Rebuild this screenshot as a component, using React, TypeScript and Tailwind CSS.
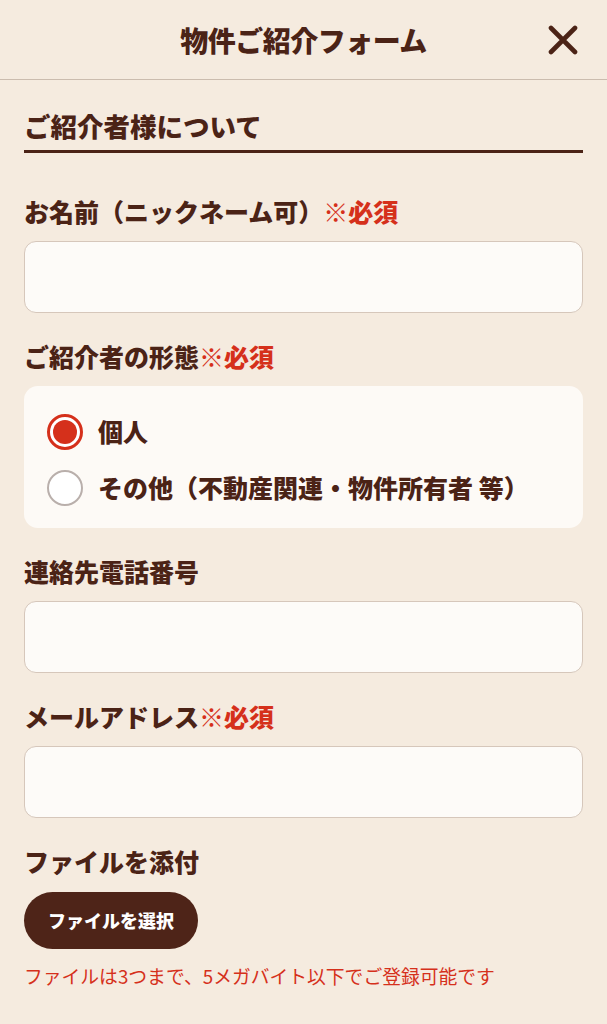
import { useState } from 'react'

const FONT = '"Noto Sans CJK JP", "Noto Sans", sans-serif'

function Required() {
  return <span className="text-[#d5301b]">※必須</span>
}

function FieldLabel({ children, required, first }: { children: React.ReactNode; required?: boolean; first?: boolean }) {
  return (
    <div
      className={
        (first ? 'mt-[43px] ' : 'mt-[28px] ') +
        'h-[30px] flex items-center text-[25px] leading-[30px] font-black text-[#4b2316]'
      }
    >
      <span>{children}</span>
      {required && <Required />}
    </div>
  )
}

function TextInput({ type = 'text' }: { type?: string }) {
  return (
    <input
      type={type}
      className="mt-[15px] block w-full h-[72px] rounded-[12px] border-[1.5px] border-[#d6c7bb] bg-[#fdfbf8] px-4 text-[20px] text-[#4b2316] outline-none"
    />
  )
}

function Radio({ checked, label, onClick }: { checked: boolean; label: string; onClick: () => void }) {
  return (
    <button type="button" onClick={onClick} className="flex items-center gap-[15px] h-[40px] text-left">
      {checked ? (
        <span className="w-[36px] h-[36px] rounded-full border-[3px] border-[#d5301b] bg-white flex items-center justify-center shrink-0">
          <span className="w-[24px] h-[24px] rounded-full bg-[#d5301b]" />
        </span>
      ) : (
        <span className="w-[36px] h-[36px] rounded-full border-[2.5px] border-[#b9afab] bg-white shrink-0" />
      )}
      <span className="text-[25px] font-black text-[#4b2316]">{label}</span>
    </button>
  )
}

export default function App() {
  const [kind, setKind] = useState<'personal' | 'other'>('personal')

  return (
    <div className="min-h-[1024px] w-full bg-[#f5ebdf]" style={{ fontFamily: FONT }}>
      {/* Header */}
      <header className="h-[80px] grid grid-cols-[1fr_auto_1fr] items-center border-b-[1.5px] border-[#cbbcae]">
        <div />
        <h1 className="text-[28px] font-black text-[#4b2316] tracking-[-0.5px]">物件ご紹介フォーム</h1>
        <div className="flex justify-end pr-[29px]">
          <button type="button" aria-label="閉じる" className="text-[#4b2316]">
            <svg viewBox="0 0 30 30" className="w-[30px] h-[30px]" fill="none" stroke="currentColor" strokeWidth={4.6} strokeLinecap="round">
              <path d="M3 3L27 27M27 3L3 27" />
            </svg>
          </button>
        </div>
      </header>

      <main className="px-[24px]">
        <h2 className="mt-[29px] pb-[7px] border-b-[3px] border-[#4b2316] text-[26.5px] leading-[34px] font-black text-[#4b2316]">
          ご紹介者様について
        </h2>

        <FieldLabel required first>お名前（ニックネーム可）</FieldLabel>
        <TextInput />

        <FieldLabel required>ご紹介者の形態</FieldLabel>
        <div className="mt-[15px] rounded-[14px] bg-[#fdfaf6] pl-[23px] pt-[26px] pb-[20px] flex flex-col gap-[16px]">
          <Radio checked={kind === 'personal'} label="個人" onClick={() => setKind('personal')} />
          <Radio checked={kind === 'other'} label="その他（不動産関連・物件所有者 等）" onClick={() => setKind('other')} />
        </div>

        <FieldLabel>連絡先電話番号</FieldLabel>
        <TextInput type="tel" />

        <FieldLabel required>メールアドレス</FieldLabel>
        <TextInput type="email" />

        <FieldLabel>ファイルを添付</FieldLabel>
        <button
          type="button"
          className="mt-[16px] h-[57px] w-[174px] rounded-full bg-[#4e2418] text-white text-[18px] font-black flex items-center justify-center"
        >
          ファイルを選択
        </button>
        <p className="mt-[15px] text-[18.8px] leading-[24px] text-[#d5301b]">
          ファイルは3つまで、5メガバイト以下でご登録可能です
        </p>
      </main>
    </div>
  )
}
